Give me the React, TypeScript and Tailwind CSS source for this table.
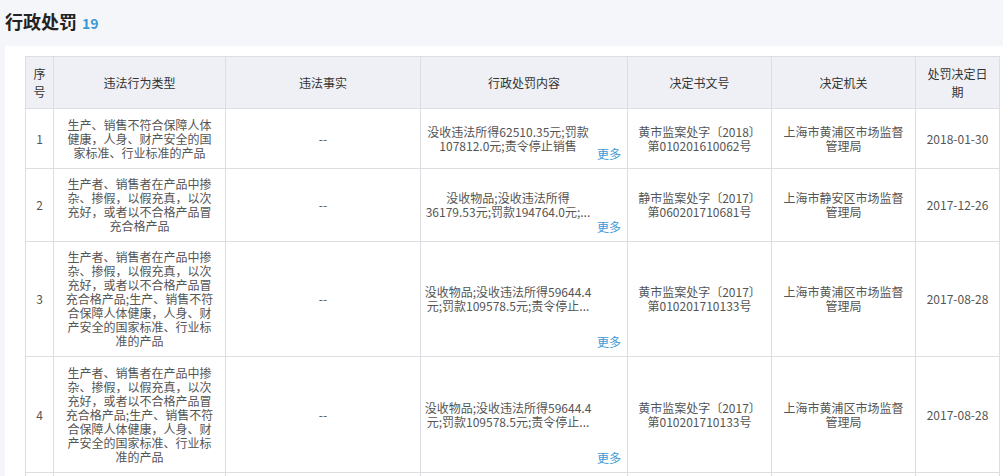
import React from "react";

const font = { fontFamily: '"Microsoft YaHei", "Noto Sans CJK SC", "Liberation Sans", sans-serif' };

type Row = {
  no: string;
  type: string[];
  content: string[];
  doc: string[];
  org: string[];
  date: string;
  h: string;
};

const rows: Row[] = [
  {
    no: "1",
    type: ["生产、销售不符合保障人体", "健康，人身、财产安全的国", "家标准、行业标准的产品"],
    content: ["没收违法所得62510.35元;罚款", "107812.0元;责令停止销售"],
    doc: ["黄市监案处字〔2018〕", "第010201610062号"],
    org: ["上海市黄浦区市场监督", "管理局"],
    date: "2018-01-30",
    h: "h-[60px]",
  },
  {
    no: "2",
    type: ["生产者、销售者在产品中掺", "杂、掺假，以假充真，以次", "充好，或者以不合格产品冒", "充合格产品"],
    content: ["没收物品;没收违法所得", "36179.53元;罚款194764.0元;..."],
    doc: ["静市监案处字〔2017〕", "第060201710681号"],
    org: ["上海市静安区市场监督", "管理局"],
    date: "2017-12-26",
    h: "h-[73px]",
  },
  {
    no: "3",
    type: [
      "生产者、销售者在产品中掺",
      "杂、掺假，以假充真，以次",
      "充好，或者以不合格产品冒",
      "充合格产品;生产、销售不符",
      "合保障人体健康，人身、财",
      "产安全的国家标准、行业标",
      "准的产品",
    ],
    content: ["没收物品;没收违法所得59644.4", "元;罚款109578.5元;责令停止..."],
    doc: ["黄市监案处字〔2017〕", "第010201710133号"],
    org: ["上海市黄浦区市场监督", "管理局"],
    date: "2017-08-28",
    h: "h-[115px]",
  },
  {
    no: "4",
    type: [
      "生产者、销售者在产品中掺",
      "杂、掺假，以假充真，以次",
      "充好，或者以不合格产品冒",
      "充合格产品;生产、销售不符",
      "合保障人体健康，人身、财",
      "产安全的国家标准、行业标",
      "准的产品",
    ],
    content: ["没收物品;没收违法所得59644.4", "元;罚款109578.5元;责令停止..."],
    doc: ["黄市监案处字〔2017〕", "第010201710133号"],
    org: ["上海市黄浦区市场监督", "管理局"],
    date: "2017-08-28",
    h: "h-[116px]",
  },
  {
    no: "5",
    type: ["生产、销售不符合保障人体", "健康，人身、财产安全的国", "家标准、行业标准的产品"],
    content: ["没收违法所得;罚款"],
    doc: ["黄市监案处字〔2017〕", "第010201710100号"],
    org: ["上海市黄浦区市场监督", "管理局"],
    date: "2017-06-15",
    h: "h-[60px]",
  },
];

function Lines({ lines }: { lines: string[] }) {
  return (
    <>
      {lines.map((l, i) => (
        <div key={i} className="whitespace-nowrap">
          {l}
        </div>
      ))}
    </>
  );
}

const th = "border border-[#dcdee3] bg-[#eef0f5] text-[#333] font-normal text-[12px] leading-[18px] text-center align-middle";
const td = "border border-[#dcdee3] text-[#555] text-[12px] leading-[14px] text-center align-middle";

export default function App() {
  return (
    <div className="w-[1003px] h-[476px] overflow-hidden bg-[#f5f6fa]" style={font}>
      <div className="h-[46px] pl-[5px] pt-[8px] flex items-baseline gap-[5px]">
        <span className="text-[18px] leading-[26px] font-bold text-[#222]">行政处罚</span>
        <span className="text-[14px] font-bold text-[#3a9ad8]">19</span>
      </div>
      <div className="ml-[5px] w-[1030px] bg-white pl-[20px] pt-[10px] pb-[20px]">
        <table className="table-fixed border-collapse w-[974px]">
          <colgroup>
            <col className="w-[28px]" />
            <col className="w-[172px]" />
            <col className="w-[195px]" />
            <col className="w-[207px]" />
            <col className="w-[144px]" />
            <col className="w-[144px]" />
            <col className="w-[84px]" />
          </colgroup>
          <thead>
            <tr className="h-[52px]">
              <th className={th}>
                序<br />号
              </th>
              <th className={th}>违法行为类型</th>
              <th className={th}>违法事实</th>
              <th className={th}>行政处罚内容</th>
              <th className={th}>决定书文号</th>
              <th className={th}>决定机关</th>
              <th className={th}>
                处罚决定日<br />期
              </th>
            </tr>
          </thead>
          <tbody>
            {rows.map((r) => (
              <tr key={r.no} className={r.h}>
                <td className={td}>{r.no}</td>
                <td className={td}>
                  <Lines lines={r.type} />
                </td>
                <td className={td}>--</td>
                <td className={`${td} relative pl-[2px] pr-[34px]`}>
                  <Lines lines={r.content} />
                  <span className="absolute right-[6px] bottom-[7px] text-[#3a9ad8] leading-[14px]">更多</span>
                </td>
                <td className={td}>
                  <Lines lines={r.doc} />
                </td>
                <td className={td}>
                  <Lines lines={r.org} />
                </td>
                <td className={td}>{r.date}</td>
              </tr>
            ))}
          </tbody>
        </table>
      </div>
    </div>
  );
}
